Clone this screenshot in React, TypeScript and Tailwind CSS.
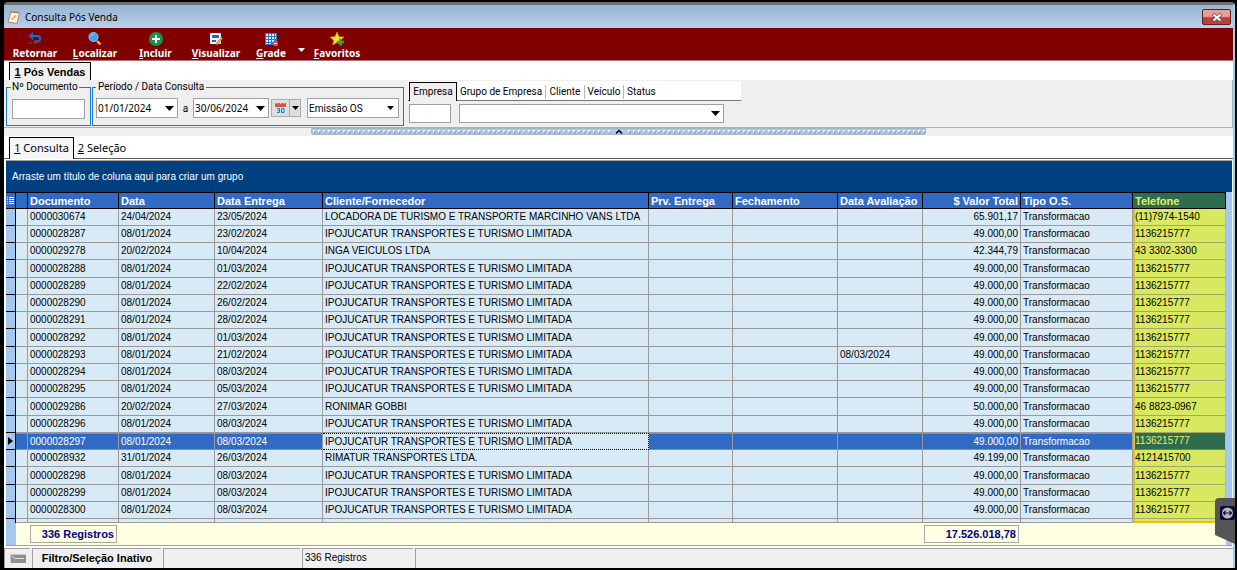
import React from "react";

const UI = "font-['Noto_Sans',sans-serif]";
const LABEL = "font-[Roboto,sans-serif]";
const GRID = "font-['Liberation_Sans',Arial,sans-serif]";

const IPO = "IPOJUCATUR TRANSPORTES E TURISMO LIMITADA";

const rows = [
  ["0000030674", "24/04/2024", "23/05/2024", "LOCADORA DE TURISMO E TRANSPORTE MARCINHO VANS LTDA", "", "65.901,17", "(11)7974-1540"],
  ["0000028287", "08/01/2024", "23/02/2024", IPO, "", "49.000,00", "1136215777"],
  ["0000029278", "20/02/2024", "10/04/2024", "INGA VEICULOS LTDA", "", "42.344,79", "43 3302-3300"],
  ["0000028288", "08/01/2024", "01/03/2024", IPO, "", "49.000,00", "1136215777"],
  ["0000028289", "08/01/2024", "22/02/2024", IPO, "", "49.000,00", "1136215777"],
  ["0000028290", "08/01/2024", "26/02/2024", IPO, "", "49.000,00", "1136215777"],
  ["0000028291", "08/01/2024", "28/02/2024", IPO, "", "49.000,00", "1136215777"],
  ["0000028292", "08/01/2024", "01/03/2024", IPO, "", "49.000,00", "1136215777"],
  ["0000028293", "08/01/2024", "21/02/2024", IPO, "08/03/2024", "49.000,00", "1136215777"],
  ["0000028294", "08/01/2024", "08/03/2024", IPO, "", "49.000,00", "1136215777"],
  ["0000028295", "08/01/2024", "05/03/2024", IPO, "", "49.000,00", "1136215777"],
  ["0000029286", "20/02/2024", "27/03/2024", "RONIMAR GOBBI", "", "50.000,00", "46 8823-0967"],
  ["0000028296", "08/01/2024", "08/03/2024", IPO, "", "49.000,00", "1136215777"],
  ["0000028297", "08/01/2024", "08/03/2024", IPO, "", "49.000,00", "1136215777"],
  ["0000028932", "31/01/2024", "26/03/2024", "RIMATUR TRANSPORTES LTDA.", "", "49.199,00", "4121415700"],
  ["0000028298", "08/01/2024", "08/03/2024", IPO, "", "49.000,00", "1136215777"],
  ["0000028299", "08/01/2024", "08/03/2024", IPO, "", "49.000,00", "1136215777"],
  ["0000028300", "08/01/2024", "08/03/2024", IPO, "", "49.000,00", "1136215777"],
];

const SELECTED = "0000028297";

const Arrow = ({ className = "" }) => (
  <svg className={className} width="9" height="5" viewBox="0 0 9 5" fill="currentColor">
    <path d="M0 0h9L4.5 5z" />
  </svg>
);

const SmallArrow = ({ className = "" }) => (
  <svg className={className} width="7" height="4" viewBox="0 0 7 4" fill="currentColor">
    <path d="M0 0h7L3.5 4z" />
  </svg>
);

const ReturnIcon = () => (
  <svg width="16" height="16" viewBox="0 0 16 16" fill="none">
    <path d="M4 5h6.5a2.700 2.700 0 0 1 0 5.400H7" stroke="#1c6cc8" strokeWidth="2" />
    <path d="M1.500 5l4.500-4v8z" fill="#1c6cc8" />
    <path d="M2 12h9" stroke="#2c4f95" strokeWidth="2" strokeDasharray="1 1" />
  </svg>
);

const SearchIcon = () => (
  <svg width="16" height="16" viewBox="0 0 16 16" fill="none">
    <path d="M10 10l3.500 3.500" stroke="#e3b878" strokeWidth="2.400" />
    <circle cx="6.500" cy="6" r="4.500" fill="#3ea0ee" stroke="#8cc8f8" />
    <path d="M4 5.500a3 3 0 0 1 2.500-2" stroke="#9bd4ff" />
  </svg>
);

const AddIcon = () => (
  <svg width="16" height="16" viewBox="0 0 16 16">
    <circle cx="8" cy="8" r="7" fill="#18944a" />
    <path d="M8 4v8M4 8h8" stroke="#fff" strokeWidth="2" />
  </svg>
);

const ViewIcon = () => (
  <svg width="16" height="16" viewBox="0 0 16 16">
    <rect x="2" y="2" width="11" height="11" rx="1" fill="#f4f7ff" />
    <path d="M4 4h7v3H4zM4 9h4v2H4z" fill="#2467c9" />
    <path d="M13.500 6l-5 6-.5 2 2-.7 4.500-5.800z" fill="#f0b840" stroke="#a24b20" strokeWidth=".5" />
  </svg>
);

const GridIcon = () => (
  <svg width="16" height="16" viewBox="0 0 16 16">
    <rect x="2" y="2" width="12" height="12" fill="#2b74c8" />
    <path d="M3 3h2v2H3zM6 3h2v2H6zM9 3h2v2H9zM12 3h1v2h-1zM3 6h2v2H3zM6 6h2v2H6zM9 6h2v2H9zM12 6h1v2h-1zM3 9h2v2H3zM6 9h2v2H6zM9 9h2v2H9zM3 12h2v1H3zM6 12h2v1H6z" fill="#e4f1ff" />
    <rect x="10" y="10" width="5" height="5" rx="1" fill="#d94a3a" />
    <path d="M11 12.500h3" stroke="#fff" />
  </svg>
);

const StarIcon = () => (
  <svg width="16" height="16" viewBox="0 0 16 16">
    <path d="M8 1l2 4.700 5 .4-3.800 3.300L12.400 14 8 11.500 3.600 14l1.200-4.600L1 6.100l5-.4z" fill="#fbdc35" stroke="#d99b1a" strokeWidth=".6" />
    <path d="M11.500 7.500v7M8 11h7" stroke="#35a83a" strokeWidth="2.400" />
  </svg>
);

const CalendarIcon = () => (
  <svg width="13" height="13" viewBox="0 0 13 13">
    <rect x="1" y="1" width="11" height="11" fill="#c6e4f8" />
    <path d="M1 1h11v4H1z" fill="#e0523f" />
    <path d="M3 0v2M6.500 0v2M10 0v2" stroke="#f3d3cc" />
    <path d="M3 6.500h2.500v4H3M3.500 8.500h2M7.500 6.500H10v4H7.500z" stroke="#2c78bd" fill="none" />
  </svg>
);

const NoteIcon = () => (
  <svg width="14" height="15" viewBox="0 0 14 15">
    <path d="M4 2l8.500 1L10 13.500 1 12z" fill="#fbf4e6" stroke="#b08850" />
    <path d="M4 .8l1 1.500M7 1l1 1.500M10 1.500l1 1.500" stroke="#7c6040" />
    <path d="M4.500 9.500l4.500-4" stroke="#d99a52" strokeWidth="1.500" />
  </svg>
);

const ToolButton = ({ icon, label, plain = false, className = "w-15" }) => (
  <button type="button" className={`flex flex-col items-center pt-[3px] text-[10px] leading-[12px] font-bold text-white ${className}`}>
    {icon}
    <span>
      {plain ? label[0] : <u className="underline-offset-1">{label[0]}</u>}
      {label.slice(1)}
    </span>
  </button>
);

const DateField = ({ label, value, className }) => (
  <div className={`flex h-5 items-center border border-[#a0a0a0] bg-white ${className}`}>
    <input aria-label={label} defaultValue={value} className="h-full w-0 flex-1 pl-px text-[10px] outline-none" />
    <button type="button" aria-label={`Abrir ${label}`} className="flex h-4 w-4 items-center justify-center">
      <Arrow />
    </button>
  </div>
);

const innerTab = "mb-px h-[14px] border-l border-[#b8b8b8] text-center leading-[14px]";

const Filters = () => (
  <section className={`flex border-r border-b border-[#b0b0b0] bg-[#efefef] pl-[2px] text-[10px] ${LABEL}`}>
    <fieldset className="my-px h-[45px] w-[85px] border border-[#1879d0] px-[5px]">
      <legend className="-ml-px px-px leading-[12px]">
        <label htmlFor="documento">Nº Documento</label>
      </legend>
      <input id="documento" className="mt-[6px] block h-5 w-full border border-[#a0a0a0] bg-white px-1 outline-none" />
    </fieldset>
    <fieldset className="my-px ml-px h-[45px] w-[312px] border border-[#1879d0] px-[3px]">
      <legend className="px-[2px] leading-[12px]">Período / Data Consulta</legend>
      <div className="mt-[5px] flex items-center">
        <DateField label="Data inicial" value="01/01/2024" className={`w-[82px] ${UI}`} />
        <span className="w-[15px] text-center">a</span>
        <DateField label="Data final" value="30/06/2024" className={`w-[76px] ${UI}`} />
        <button type="button" aria-label="Calendário" className="ml-[2px] flex h-[18px] w-[19px] items-center justify-center border border-[#acacac] bg-[#dedede]">
          <CalendarIcon />
        </button>
        <button type="button" aria-label="Opções do calendário" className="-ml-px flex h-[18px] w-3 items-center justify-center border border-[#acacac] bg-[#dedede]">
          <SmallArrow />
        </button>
        <div className="ml-[6px] grid h-5 w-[92px] items-center border border-[#a0a0a0] bg-white">
          <select aria-label="Tipo de data" className="col-start-1 row-start-1 appearance-none bg-transparent pl-px outline-none">
            <option>Emissão OS</option>
          </select>
          <SmallArrow className="pointer-events-none col-start-1 row-start-1 mr-1 justify-self-end" />
        </div>
      </div>
    </fieldset>
    <div className="ml-1 w-[333px] pt-px">
      <div className="flex h-5 items-end border-b border-[#707870] bg-white" role="tablist">
        <button type="button" role="tab" aria-selected="true" className="-mb-px ml-px h-[19px] w-[48px] border-x border-t border-black bg-[#efefef] leading-[18px]">Empresa</button>
        <button type="button" role="tab" className="mb-px w-[88px] text-center leading-[14px]">Grupo de Empresa</button>
        <button type="button" role="tab" className={`${innerTab} w-[39px]`}>Cliente</button>
        <button type="button" role="tab" className={`${innerTab} w-[39px]`}>Veículo</button>
        <button type="button" role="tab" className={`${innerTab} pl-[3px]`}>Status</button>
      </div>
      <div className="mt-[3px] ml-px flex gap-2">
        <input aria-label="Código da empresa" className="h-[19px] w-[42px] border border-[#a0a0a0] bg-white px-1 outline-none" />
        <div className="grid h-[19px] w-[265px] items-center border border-[#a0a0a0] bg-white">
          <select aria-label="Empresa" className="col-start-1 row-start-1 appearance-none bg-transparent outline-none">
            <option />
          </select>
          <Arrow className="pointer-events-none col-start-1 row-start-1 mr-[3px] justify-self-end" />
        </div>
      </div>
    </div>
  </section>
);

const Splitter = () => (
  <div className="flex h-2 items-start justify-center bg-[linear-gradient(90deg,#efefef_25%,#fff_25%,#fff_75%,#efefef_75%)]">
    <div className="flex h-[7px] w-1/2 rounded-b-xs border border-[#a8b4c0] bg-[#a6caf0]">
      <svg className="h-[5px] flex-1" aria-hidden="true">
        <defs>
          <pattern id="grip" width="5" height="5" patternUnits="userSpaceOnUse">
            <path d="M1 1h2v2H1z" fill="#fff" />
            <path d="M3 2v2H2" stroke="#8a8f98" fill="none" />
          </pattern>
        </defs>
        <rect width="100%" height="5" fill="url(#grip)" />
      </svg>
      <button type="button" aria-label="Recolher filtros" className="flex w-4 items-center justify-center bg-[#a6caf0]">
        <svg width="8" height="5" viewBox="0 0 8 5"><path d="M1 4.500L4 1.500l3 3" stroke="#000" strokeWidth="1.500" fill="none" /></svg>
      </button>
      <svg className="h-[5px] flex-1" aria-hidden="true">
        <rect width="100%" height="5" fill="url(#grip)" />
      </svg>
    </div>
  </div>
);

const head = "border-r border-y border-black px-[2px] text-left text-[11px] leading-[14px] font-bold whitespace-nowrap";

const DataGrid = () => (
  <table className={`w-full table-fixed border-separate border-spacing-0 text-[10px] leading-[14px] ${GRID}`}>
    <colgroup>
      <col className="w-[10px]" />
      <col className="w-[12px]" />
      <col className="w-[91px]" />
      <col className="w-[96px]" />
      <col className="w-[108px]" />
      <col />
      <col className="w-[84px]" />
      <col className="w-[105px]" />
      <col className="w-[85px]" />
      <col className="w-[98px]" />
      <col className="w-[112px]" />
      <col className="w-[93px]" />
    </colgroup>
    <thead>
      <tr className="h-[17px] bg-[#316ac5] text-white">
        <th className="border-y border-r border-black p-0">
          <svg width="7" height="10" viewBox="0 0 7 10" className="mx-auto block">
            <path d="M0 1.500h1m1 0h5M0 3.500h1m1 0h5M0 5.500h1m1 0h5M0 7.500h1m1 0h5" stroke="#fff" />
          </svg>
        </th>
        <th className={head} />
        <th className={head}>Documento</th>
        <th className={head}>Data</th>
        <th className={head}>Data Entrega</th>
        <th className={head}>Cliente/Fornecedor</th>
        <th className={head}>Prv. Entrega</th>
        <th className={head}>Fechamento</th>
        <th className={head}>Data Avaliação</th>
        <th className={`${head} text-right`}>$ Valor Total</th>
        <th className={head}>Tipo O.S.</th>
        <th className={`${head} bg-[#2f6b4f] text-[#e6f060]`}>Telefone</th>
      </tr>
    </thead>
    <tbody>
      {rows.map(([doc, data, entrega, cliente, avaliacao, valor, telefone]) => {
        const sel = doc === SELECTED;
        const cell = `border-r border-b px-[2px] whitespace-nowrap overflow-hidden ${
          sel ? "border-r-[#9a9a9a] border-b-[#a08c70] border-t border-t-[#a08c70] bg-[#316ac5] text-white" : "border-[#9a9a9a]"
        }`;
        return (
          <tr key={doc} className="h-[17px] bg-[#d8eaf6] text-black nth-[4n]:h-[18px]">
            <td className="border-r border-b border-black bg-[#a6c8f0] p-0">
              {sel && <svg width="5" height="8" viewBox="0 0 5 8" className="mx-auto block"><path d="M0 0l5 4-5 4z" /></svg>}
            </td>
            <td className={cell} />
            <td className={cell}>{doc}</td>
            <td className={cell}>{data}</td>
            <td className={cell}>{entrega}</td>
            <td className={sel ? "border-y border-r border-dotted border-black px-[2px] whitespace-nowrap" : cell}>{cliente}</td>
            <td className={cell} />
            <td className={cell} />
            <td className={cell}>{avaliacao}</td>
            <td className={`${cell} text-right`}>{valor}</td>
            <td className={cell}>Transformacao</td>
            <td
              className={`border-r border-b border-l-2 border-x-[#e0c020] px-0 whitespace-nowrap ${
                sel ? "border-b-[#808040] bg-[#2f6b4f] text-[#e6f060]" : "border-b-[#a5a860] bg-[#d8e860]"
              }`}
            >
              {telefone}
            </td>
          </tr>
        );
      })}
      <tr className="h-1 bg-[#d8eaf6]" aria-hidden="true">
        <td className="border-r border-black bg-[#a6c8f0] p-0" />
        {Array.from({ length: 10 }, (_, i) => (
          <td key={i} className="border-r border-b border-[#9a9a9a] p-0" />
        ))}
        <td className="border-r border-b-2 border-l-2 border-[#f0c010] bg-[#d8e860] p-0" />
      </tr>
    </tbody>
  </table>
);

const Totals = () => (
  <div className={`flex flex-1 bg-[#ffffe1] text-[11px] font-bold text-[#000080] ${GRID}`}>
    <div className="w-[10px] bg-[#a6c8f0]" />
    <div className="mt-[2px] ml-[14px] h-[18px] w-[87px] border border-[#a8a8a0] pr-[2px] text-right leading-[17px]">336 Registros</div>
    <div className="mt-[2px] mr-[207px] ml-auto h-[18px] w-[95px] border border-[#a8a8a0] pr-[2px] text-right leading-[17px]">17.526.018,78</div>
    <div className="w-[6px] bg-[#a6c8f0]" />
  </div>
);

const panel = "border-t border-l border-[#a0a0a0]";

const StatusBar = () => (
  <footer className={`mt-[2px] flex h-5 gap-[2px] bg-[#efefef] text-[11px] leading-[18px] ${GRID}`}>
    <div className={`${panel} flex w-[26px] items-center justify-center`}>
      <svg width="16" height="9" viewBox="0 0 16 9">
        <rect width="16" height="9" fill="#909090" />
        <path d="M0 0h16v1H1v8H0z" fill="#c8c8c8" />
        <path d="M2 2l3 2.500h9" stroke="#e0e0e0" fill="none" />
      </svg>
    </div>
    <div className={`${panel} w-[129px] text-center font-bold`}>Filtro/Seleção Inativo</div>
    <div className={`${panel} w-[137px]`} />
    <div className={`${panel} w-[111px] pl-[2px] text-[10px]`}>336 Registros</div>
    <div className={`${panel} flex-1`} />
  </footer>
);

export default function App() {
  return (
    <div className={`relative min-h-screen bg-black pt-[2px] pr-[2px] pb-[2px] pl-1 text-black ${UI}`}>
      <div className="flex min-h-[566px] flex-col rounded-t border-t-3 border-r-2 border-t-[#707070] border-r-[#8fd8ee] bg-white">
        <header className="flex h-[23px] items-center bg-linear-to-b from-[#98b4d2] to-[#b9d1ea] pt-px pl-[3px] text-[10px]">
          <NoteIcon />
          <h1 className="ml-1">Consulta Pós Venda</h1>
          <button
            type="button"
            aria-label="Fechar"
            className="mr-[2px] ml-auto flex h-4 w-[29px] items-center justify-center rounded-xs border border-[#5a2030] bg-linear-to-b from-[#e8a090] from-45% to-[#c04030] to-55%"
          >
            <svg width="12" height="9" viewBox="0 0 12 9">
              <path d="M2 1l8 7M10 1L2 8" stroke="#505a70" strokeWidth="3.600" />
              <path d="M2.500 1.500l7 6M9.500 1.500l-7 6" stroke="#fff" strokeWidth="2" />
            </svg>
          </button>
        </header>
        <nav className="flex h-[33px] border-b border-[#b87070] bg-[#800000] pl-px">
          <ToolButton icon={<ReturnIcon />} label="Retornar" plain />
          <ToolButton icon={<SearchIcon />} label="Localizar" />
          <ToolButton icon={<AddIcon />} label="Incluir" className="w-[61px]" />
          <ToolButton icon={<ViewIcon />} label="Visualizar" />
          <ToolButton icon={<GridIcon />} label="Grade" className="w-[50px]" />
          <button type="button" aria-label="Opções da grade" className="flex w-[10px] items-center justify-center pt-3 text-white">
            <SmallArrow />
          </button>
          <ToolButton icon={<StarIcon />} label="Favoritos" className="w-[62px]" />
        </nav>
        <div className="flex h-[19px] items-end pl-[5px]" role="tablist">
          <button type="button" role="tab" aria-selected="true" className={`h-[18px] w-[82px] border-x border-t border-black bg-[#efefef] text-[11px] leading-[18px] font-bold ${GRID}`}>
            <u>1</u> Pós Vendas
          </button>
        </div>
        <Filters />
        <Splitter />
        <div className="flex h-[23px] items-end border-b border-[#606060] pl-[5px] text-[11px]" role="tablist">
          <button type="button" role="tab" aria-selected="true" className="-mb-px h-[22px] w-[65px] border-x border-t border-black bg-[#f6f6f6]">
            <u>1</u> Consulta
          </button>
          <button type="button" role="tab" className="h-5 w-14 text-center">
            <u>2</u> Seleção
          </button>
        </div>
        <main className="mt-px mr-px ml-[2px] flex flex-1 flex-col border-t border-b border-[#a0a0a0]">
          <p className={`h-[31px] bg-[#004080] pl-[6px] text-[10px] leading-[32px] text-white ${GRID}`}>Arraste um título de coluna aqui para criar um grupo</p>
          <div className="border-r-[6px] border-[#a6c8f0]">
            <DataGrid />
          </div>
          <Totals />
        </main>
        <StatusBar />
      </div>
      <button type="button" aria-label="Painel remoto" className="absolute top-[498px] right-[2px]">
        <svg width="20" height="46" viewBox="0 0 20 46">
          <path d="M20 0H4a4 4 0 0 0-4 4v33l20 9z" fill="#555" />
          <rect x="5" y="8" width="15" height="14" rx="2" fill="#0c0c3c" />
          <circle cx="12.500" cy="15" r="5.500" fill="#b8b8b8" />
          <path d="M9 15h7M10.500 13L8.500 15l2 2M14.500 13l2 2-2 2" stroke="#0c0c3c" strokeWidth="1.200" fill="none" />
        </svg>
      </button>
    </div>
  );
}
